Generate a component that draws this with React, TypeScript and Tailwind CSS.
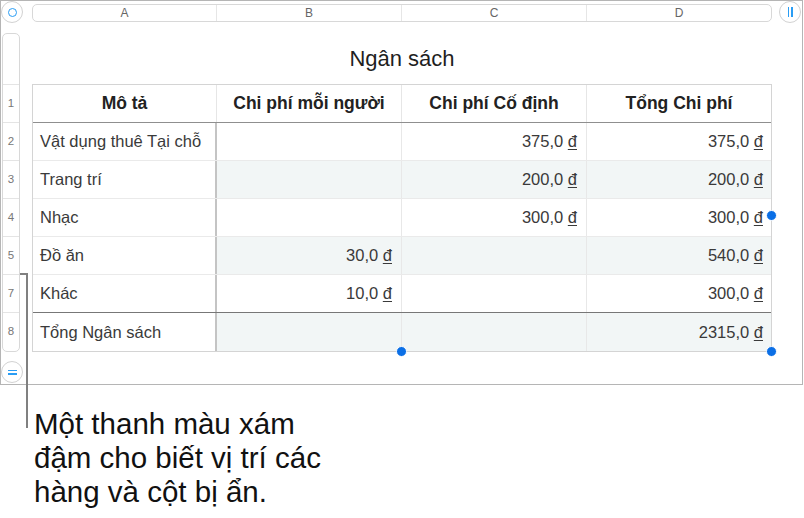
import React from "react";

const font = { fontFamily: '"Liberation Sans", Arial, sans-serif' };

type Row = { label: string; a: string; b?: string; c?: string; d?: string; shade?: boolean };

const rows: Row[] = [
  { label: "2", a: "Vật dụng thuê Tại chỗ", c: "375,0", d: "375,0" },
  { label: "3", a: "Trang trí", c: "200,0", d: "200,0", shade: true },
  { label: "4", a: "Nhạc", c: "300,0", d: "300,0" },
  { label: "5", a: "Đồ ăn", b: "30,0", d: "540,0", shade: true },
  { label: "7", a: "Khác", b: "10,0", d: "300,0" },
];

function Money({ v }: { v?: string }) {
  if (!v) return null;
  return (
    <span>
      {v} <span className="underline underline-offset-2">đ</span>
    </span>
  );
}

function Handle({ className }: { className: string }) {
  return (
    <div
      className={
        "absolute w-[11px] h-[11px] rounded-full bg-[#0b6fe6] border-[1.5px] border-white " + className
      }
    />
  );
}

export default function App() {
  return (
    <div className="relative w-[804px] h-[518px] bg-white overflow-hidden text-[#2b2b2b]" style={font}>
      {/* frame */}
      <div className="w-[803px] h-[385px] border border-[#b5b5b5] flex">
        {/* row header bar */}
        <div className="ml-[1px] mt-[32px] w-[18px] h-[319px] border border-[#d8d8d8] rounded-[5px] flex flex-col text-[11.5px] text-[#777]">
          <div className="h-[51px] border-b border-[#e4e4e4] shrink-0" />
          {["1", "2", "3", "4", "5", "7"].map((n) => (
            <div key={n} className="h-[38px] shrink-0 border-b border-[#e4e4e4] flex items-center justify-center">
              {n}
            </div>
          ))}
          <div className="h-[37px] shrink-0 flex items-center justify-center">8</div>
        </div>

        {/* main */}
        <div className="ml-[12px] flex flex-col">
          {/* column header bar */}
          <div className="mt-[3px] h-[18px] w-[740px] border border-[#d8d8d8] rounded-[5px] flex text-[12px] text-[#666]">
            <div className="w-[184px] border-r border-[#e6e6e6] flex items-center justify-center">A</div>
            <div className="w-[185px] border-r border-[#e6e6e6] flex items-center justify-center">B</div>
            <div className="w-[185px] border-r border-[#e6e6e6] flex items-center justify-center">C</div>
            <div className="flex-1 flex items-center justify-center">D</div>
          </div>

          {/* title */}
          <div className="h-[62px] pt-[24px] text-center text-[22px] leading-[26px] text-[#1f1f1f]">Ngân sách</div>

          {/* table */}
          <div className="w-[740px] border border-[#d4d4d4] flex flex-col text-[16.5px]">
            {/* header */}
            <div className="h-[38px] border-b-[1.5px] border-[#8f8f8f] flex font-bold text-[17.5px] text-[#222]">
              <div className="w-[184px] border-r border-[#e6e6e6] flex items-center justify-center">Mô tả</div>
              <div className="w-[185px] border-r border-[#e6e6e6] flex items-center justify-center">Chi phí mỗi người</div>
              <div className="w-[185px] border-r border-[#e6e6e6] flex items-center justify-center">Chi phí Cố định</div>
              <div className="flex-1 flex items-center justify-center">Tổng Chi phí</div>
            </div>
            {rows.map((r, i) => (
              <div
                key={r.label}
                className={
                  "h-[38px] flex text-[#3a3a3a] " +
                  (i === rows.length - 1 ? "border-b-[1.5px] border-[#777]" : "border-b border-[#eaeaea]")
                }
              >
                <div className="w-[184px] border-r-2 border-[#c4c4c4] flex items-center pl-[7px] bg-white">{r.a}</div>
                <div
                  className={
                    "w-[185px] border-r border-[#e8e8e8] flex items-center justify-end pr-[9px] " +
                    (r.shade ? "bg-[#f2f6f6]" : "bg-white")
                  }
                >
                  <Money v={r.b} />
                </div>
                <div
                  className={
                    "w-[185px] border-r border-[#e8e8e8] flex items-center justify-end pr-[9px] " +
                    (r.shade ? "bg-[#f2f6f6]" : "bg-white")
                  }
                >
                  <Money v={r.c} />
                </div>
                <div
                  className={
                    "flex-1 flex items-center justify-end pr-[8px] " + (r.shade ? "bg-[#f2f6f6]" : "bg-white")
                  }
                >
                  <Money v={r.d} />
                </div>
              </div>
            ))}
            {/* footer */}
            <div className="h-[38px] flex text-[#3a3a3a]">
              <div className="w-[184px] border-r-2 border-[#c4c4c4] flex items-center pl-[7px] bg-white">Tổng Ngân sách</div>
              <div className="w-[185px] border-r border-[#e8e8e8] bg-[#f2f6f6]" />
              <div className="w-[185px] border-r border-[#e8e8e8] bg-[#f2f6f6]" />
              <div className="flex-1 flex items-center justify-end pr-[8px] bg-[#f2f6f6]">
                <Money v="2315,0" />
              </div>
            </div>
          </div>
        </div>
      </div>

      {/* callout text */}
      <div className="mt-[22px] pl-[34px] text-[29.5px] leading-[34px] text-[#111]">
        <div>Một thanh màu xám</div>
        <div>đậm cho biết vị trí các</div>
        <div>hàng và cột bị ẩn.</div>
      </div>

      {/* overlays: corner buttons */}
      <div className="absolute left-[1px] top-[1px] w-[22px] h-[22px] rounded-full bg-white border border-[#d2d2d2] flex items-center justify-center">
        <div className="w-[9px] h-[9px] rounded-full border-[1.5px] border-[#2a9df4]" />
      </div>
      <div className="absolute left-[779px] top-[1px] w-[22px] h-[22px] rounded-full bg-white border border-[#d2d2d2] flex items-center justify-center gap-[2px]">
        <div className="w-[1.5px] h-[10px] bg-[#2a9df4]" />
        <div className="w-[1.5px] h-[10px] bg-[#2a9df4]" />
      </div>
      <div className="absolute left-[1px] top-[361px] w-[22px] h-[22px] rounded-full bg-white border border-[#d2d2d2] flex flex-col items-center justify-center gap-[2px]">
        <div className="w-[9px] h-[1.5px] bg-[#2a9df4]" />
        <div className="w-[9px] h-[1.5px] bg-[#2a9df4]" />
      </div>

      {/* hidden-row indicator / callout line */}
      <div className="absolute left-[20px] top-[273px] w-[8px] h-[2px] bg-[#808080]" />
      <div className="absolute left-[26px] top-[273px] w-[2px] h-[155px] bg-[#808080]" />

      {/* selection handles */}
      <Handle className="left-[396px] top-[346px]" />
      <Handle className="left-[766px] top-[346px]" />
      <Handle className="left-[766px] top-[210px]" />
    </div>
  );
}
